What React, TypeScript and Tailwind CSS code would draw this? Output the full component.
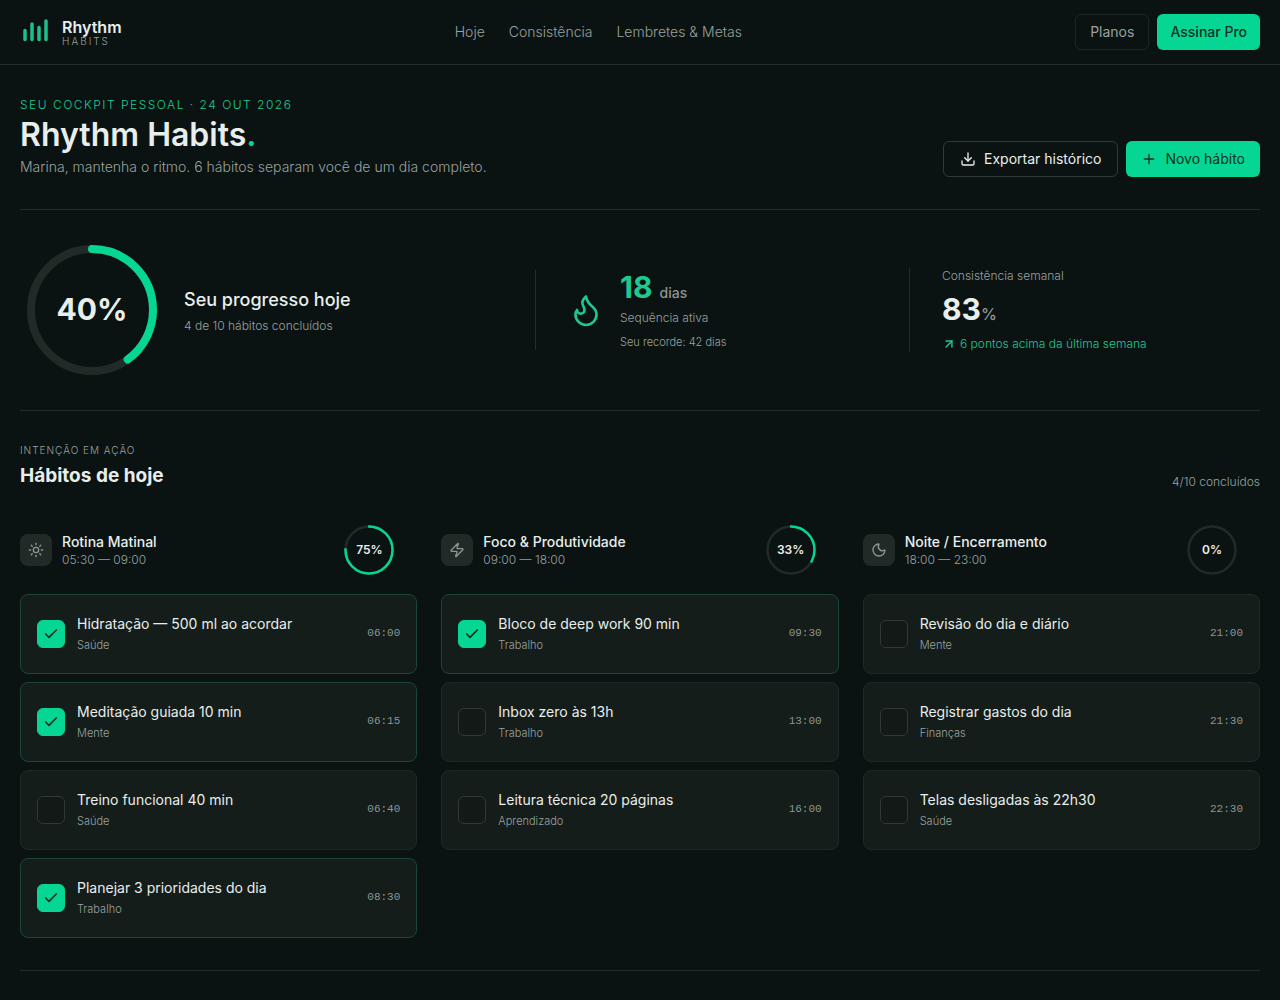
import { ArrowUpRight, Check, Download, Moon, Plus, Sun, Zap } from 'lucide-react';
import type { LucideIcon } from 'lucide-react';

type Habit = {
  name: string;
  category: string;
  time: string;
  done: boolean;
};

type Routine = {
  title: string;
  range: string;
  icon: LucideIcon;
  percent: number;
  habits: Habit[];
};

const navLinks = [
  { label: 'Hoje', href: '#hoje' },
  { label: 'Consistência', href: '#consistencia' },
  { label: 'Lembretes & Metas', href: '#lembretes' },
];

const routines: Routine[] = [
  {
    title: 'Rotina Matinal',
    range: '05:30 — 09:00',
    icon: Sun,
    percent: 75,
    habits: [
      { name: 'Hidratação — 500 ml ao acordar', category: 'Saúde', time: '06:00', done: true },
      { name: 'Meditação guiada 10 min', category: 'Mente', time: '06:15', done: true },
      { name: 'Treino funcional 40 min', category: 'Saúde', time: '06:40', done: false },
      { name: 'Planejar 3 prioridades do dia', category: 'Trabalho', time: '08:30', done: true },
    ],
  },
  {
    title: 'Foco & Produtividade',
    range: '09:00 — 18:00',
    icon: Zap,
    percent: 33,
    habits: [
      { name: 'Bloco de deep work 90 min', category: 'Trabalho', time: '09:30', done: true },
      { name: 'Inbox zero às 13h', category: 'Trabalho', time: '13:00', done: false },
      { name: 'Leitura técnica 20 páginas', category: 'Aprendizado', time: '16:00', done: false },
    ],
  },
  {
    title: 'Noite / Encerramento',
    range: '18:00 — 23:00',
    icon: Moon,
    percent: 0,
    habits: [
      { name: 'Revisão do dia e diário', category: 'Mente', time: '21:00', done: false },
      { name: 'Registrar gastos do dia', category: 'Finanças', time: '21:30', done: false },
      { name: 'Telas desligadas às 22h30', category: 'Saúde', time: '22:30', done: false },
    ],
  },
];

function Ring({ size, radius, stroke, percent }: { size: number; radius: number; stroke: number; percent: number }) {
  const length = 2 * Math.PI * radius;
  const center = size / 2;

  return (
    <svg width={size} height={size} className="-rotate-90" aria-hidden="true">
      <circle cx={center} cy={center} r={radius} fill="none" strokeWidth={stroke} className="stroke-[#222a28]" />
      {percent > 0 && (
        <circle
          cx={center}
          cy={center}
          r={radius}
          fill="none"
          strokeWidth={stroke}
          strokeLinecap="round"
          strokeDasharray={length}
          strokeDashoffset={length * (1 - percent / 100)}
          className="stroke-[#06d694]"
        />
      )}
    </svg>
  );
}

function Logo() {
  return (
    <a href="#" className="flex items-center gap-2.5">
      <svg width="32" height="32" viewBox="0 0 32 32" fill="none" strokeWidth="3.5" strokeLinecap="round" className="stroke-[#1fbf8a]" aria-hidden="true">
        <path d="M5 14.500v9M12 8v15.500M19 11.500v12M26 5v18.500" />
      </svg>
      <span className="flex flex-col">
        <span className="text-base leading-[18px] font-semibold text-[#e8eeec]">Rhythm</span>
        <span className="text-[10px] leading-[10px] font-light tracking-[2px] text-[#98a29f]">HABITS</span>
      </span>
    </a>
  );
}

function Header() {
  return (
    <header className="border-b border-[#232c2a]">
      <div className="flex h-16 items-center justify-between px-5">
        <Logo />
        <nav className="flex gap-6">
          {navLinks.map((link) => (
            <a key={link.href} href={link.href} className="text-sm font-light text-[#98a29f]">
              {link.label}
            </a>
          ))}
        </nav>
        <div className="flex gap-2">
          <button type="button" className="h-9 rounded-md border border-[#1e2725] px-3.5 text-sm text-[#98a29f]">
            Planos
          </button>
          <button type="button" className="h-9 rounded-md bg-[#06d694] px-[13px] text-sm font-medium text-[#06301f]">
            Assinar Pro
          </button>
        </div>
      </div>
    </header>
  );
}

function Flame() {
  return (
    <svg width="36" height="36" viewBox="0 0 24 24" fill="none" strokeWidth="1.75" strokeLinecap="round" strokeLinejoin="round" className="shrink-0 stroke-[#1fc890]" aria-hidden="true">
      <path d="M8.5 14.5A2.5 2.5 0 0 0 11 12c0-1.38-.5-2-1-3-1.072-2.143-.224-4.054 2-6 .5 2.500 2 4.900 4 6.500 2 1.600 3 3.500 3 5.500a7 7 0 1 1-14 0c0-1.153.433-2.294 1-3a2.500 2.500 0 0 0 2.500 2.500z" />
    </svg>
  );
}

function Stats() {
  return (
    <section className="grid grid-cols-[515fr_374fr_351fr] items-center border-b border-[#232c2a] py-7">
      <div className="flex items-center gap-5">
        <div className="relative">
          <Ring size={144} radius={61} stroke={8} percent={40} />
          <span className="absolute inset-0 flex items-center justify-center pb-0.5 text-[30px] font-bold text-[#e8eeec]">40%</span>
        </div>
        <div>
          <h2 className="text-lg leading-7 font-medium text-[#e8eeec]">Seu progresso hoje</h2>
          <p className="mt-1 text-xs leading-4 font-light text-[#98a29f]">4 de 10 hábitos concluídos</p>
        </div>
      </div>

      <div className="flex items-center gap-4 border-l border-[#232c2a] pl-8">
        <Flame />
        <div>
          <p className="text-[30px] leading-[34px] font-bold text-[#1fc890]">
            18 <span className="text-sm font-medium text-[#8c9693]">dias</span>
          </p>
          <p className="mt-1.5 text-xs leading-4 font-light text-[#98a29f]">Sequência ativa</p>
          <p className="mt-2 text-[11px] leading-4 font-light text-[#98a29f]">Seu recorde: 42 dias</p>
        </div>
      </div>

      <div className="border-l border-[#232c2a] pl-8">
        <p className="text-xs leading-4 font-light text-[#98a29f]">Consistência semanal</p>
        <p className="mt-2 mb-2.5 text-[30px] leading-[34px] font-bold text-[#e8eeec]">
          83<span className="text-base font-medium text-[#8c9693]">%</span>
        </p>
        <p className="flex items-center gap-1 text-xs leading-4 font-light text-[#1fc890]">
          <ArrowUpRight className="h-3.5 w-3.5" strokeWidth={2.5} />
          6 pontos acima da última semana
        </p>
      </div>
    </section>
  );
}

function HabitCard({ habit }: { habit: Habit }) {
  return (
    <label
      className={`flex h-20 items-center gap-3 rounded-lg border bg-[#151d1b] px-4 ${
        habit.done ? 'border-[#1a4537]' : 'border-[#1f2826]'
      }`}
    >
      <span className="relative h-7 w-7 shrink-0">
        <input
          type="checkbox"
          defaultChecked={habit.done}
          className="peer block h-7 w-7 appearance-none rounded-md border border-[#303936] bg-[#121917] checked:border-[#06d694] checked:bg-[#06d694]"
        />
        <Check className="pointer-events-none absolute inset-0 m-auto hidden h-4 w-4 text-[#06301f] peer-checked:block" strokeWidth={2.5} />
      </span>
      <span className="min-w-0 flex-1 pb-0.5">
        <span className="block text-sm leading-5 text-[#e8eeec]">{habit.name}</span>
        <span className="mt-[3px] block text-[11px] leading-4 font-light text-[#98a29f]">{habit.category}</span>
      </span>
      <time className="pb-0.5 font-['Liberation_Mono',monospace] text-[11px] text-[#8c9693]">{habit.time}</time>
    </label>
  );
}

function RoutineColumn({ routine }: { routine: Routine }) {
  const Icon = routine.icon;

  return (
    <div>
      <div className="flex items-center gap-2.5">
        <span className="flex h-8 w-8 items-center justify-center rounded-lg bg-[#222a28] text-[#8c9693]">
          <Icon className="h-4 w-4" />
        </span>
        <div className="flex-1">
          <h3 className="text-sm leading-5 font-medium text-[#e8eeec]">{routine.title}</h3>
          <p className="text-xs leading-4 font-light text-[#98a29f]">{routine.range}</p>
        </div>
        <div className="relative mr-[22px]">
          <Ring size={52} radius={23.5} stroke={2.5} percent={routine.percent} />
          <span className="absolute inset-0 flex items-center justify-center text-xs font-semibold text-[#e8eeec]">
            {routine.percent}%
          </span>
        </div>
      </div>
      <div className="mt-[18px] flex flex-col gap-2">
        {routine.habits.map((habit) => (
          <HabitCard key={habit.name} habit={habit} />
        ))}
      </div>
    </div>
  );
}

export default function App() {
  return (
    <div className="min-h-screen bg-[#0b1312] font-[Inter,sans-serif]">
      <Header />
      <main className="px-5 pt-8">
        <section className="flex items-end justify-between border-b border-[#232c2a] pb-8">
          <div>
            <p className="text-xs leading-4 tracking-[1.5px] font-light text-[#1fc890]">SEU COCKPIT PESSOAL · 24 OUT 2026</p>
            <h1 className="mt-1 text-[32px] leading-9 font-semibold text-[#e8eeec]">
              Rhythm Habits<span className="text-[#06d694]">.</span>
            </h1>
            <p className="mt-1 text-sm leading-5 font-light text-[#98a29f]">
              Marina, mantenha o ritmo. 6 hábitos separam você de um dia completo.
            </p>
          </div>
          <div className="flex gap-2">
            <button type="button" className="flex h-9 items-center gap-2 rounded-md border border-[#303936] px-4 text-sm text-[#e8eeec]">
              <Download className="h-4 w-4" />
              Exportar histórico
            </button>
            <button type="button" className="flex h-9 items-center gap-2 rounded-md bg-[#06d694] px-[15px] text-sm text-[#06301f]">
              <Plus className="h-4 w-4" />
              Novo hábito
            </button>
          </div>
        </section>

        <Stats />

        <section id="hoje" className="border-b border-[#232c2a] py-8">
          <div className="flex items-end justify-between">
            <div>
              <p className="text-[10px] leading-[15px] tracking-widest font-light text-[#98a29f]">INTENÇÃO EM AÇÃO</p>
              <h2 className="mt-1 text-[19px] leading-7 font-bold text-[#e8eeec]">Hábitos de hoje</h2>
            </div>
            <p className="text-xs leading-4 font-light text-[#98a29f]">4/10 concluídos</p>
          </div>
          <div className="mt-[34px] grid grid-cols-3 gap-6">
            {routines.map((routine) => (
              <RoutineColumn key={routine.title} routine={routine} />
            ))}
          </div>
        </section>
      </main>
    </div>
  );
}
